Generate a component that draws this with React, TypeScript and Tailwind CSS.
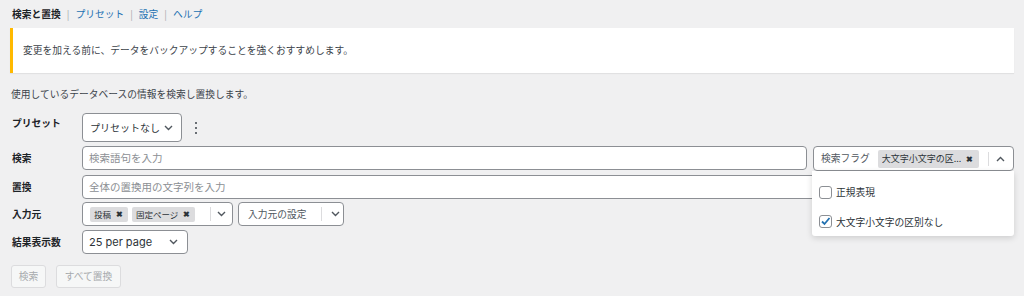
import React from 'react';

const Chevron = ({ up = false }: { up?: boolean }) => (
  <svg width="9" height="6" viewBox="0 0 9 6" className={up ? 'rotate-180' : ''}>
    <polyline points="1,1 4.5,4.5 8,1" fill="none" stroke="#50575e" strokeWidth="1.4" />
  </svg>
);

const Tag = ({ label, className = '' }: { label: string; className?: string }) => (
  <span className={`flex h-[15px] items-center gap-[5px] rounded-[2px] bg-[#dcdcde] pl-[4px] pr-[5px] text-[8.5px] text-[#2c3338] ${className}`}>
    <span className="truncate">{label}</span>
    <span className="text-[8px] font-bold leading-none">✖</span>
  </span>
);

const Checkbox = ({ checked }: { checked?: boolean }) => (
  <span className="flex h-[13px] w-[13px] items-center justify-center rounded-[3px] border border-[#8c8f94] bg-white">
    {checked && (
      <svg width="11" height="11" viewBox="0 0 11 11">
        <polyline points="2,5.5 4.5,8 9.5,2" fill="none" stroke="#2271b1" strokeWidth="1.8" />
      </svg>
    )}
  </span>
);

export default function App() {
  return (
    <div className="h-[296px] w-[1024px] overflow-hidden bg-[#f0f0f1] px-[10px] font-['Noto_Sans_CJK_JP',sans-serif] text-[9.75px] text-[#3c434a]">
      {/* tabs */}
      <div className="flex h-[21px] items-center gap-[6px] pl-[2px] pt-[7px] leading-[14px]">
        <span className="font-bold text-[#1d2327]">検索と置換</span>
        <span className="text-[#a7aaad]">|</span>
        <span className="text-[#2271b1]">プリセット</span>
        <span className="text-[#a7aaad]">|</span>
        <span className="text-[#2271b1]">設定</span>
        <span className="text-[#a7aaad]">|</span>
        <span className="text-[#2271b1]">ヘルプ</span>
      </div>

      {/* notice */}
      <div className="mt-[7px] flex h-[45px] items-center border-l-[3px] border-[#ffb900] bg-white pl-[10px] text-[#3c434a] shadow-[0_1px_1px_rgba(0,0,0,0.06)]">
        変更を加える前に、データをバックアップすることを強くおすすめします。
      </div>

      <p className="mt-[14px] pl-[1px] leading-[14px]">使用しているデータベースの情報を検索し置換します。</p>

      {/* form */}
      <div className="mt-[12px] flex flex-col">
        <div className="flex h-[29px]">
          <div className="w-[72px] pl-[2px] pt-[3px] font-bold leading-[14px] text-[#1d2327]">プリセット</div>
          <div className="flex h-[29px] w-[100px] items-center justify-between rounded-[4px] border border-[#8c8f94] bg-white pl-[7px] pr-[8px] text-[10px] text-[#2c3338]">
            <span>プリセットなし</span>
            <Chevron />
          </div>
          <div className="ml-[13px] flex flex-col items-center justify-center gap-[3px]">
            <span className="h-[2px] w-[2px] rounded-full bg-[#3c434a]" />
            <span className="h-[2px] w-[2px] rounded-full bg-[#3c434a]" />
            <span className="h-[2px] w-[2px] rounded-full bg-[#3c434a]" />
          </div>
        </div>

        <div className="mt-[4px] flex items-start">
          <div className="flex h-[24px] w-[72px] items-center pl-[2px] font-bold text-[#1d2327]">検索</div>
          <div className="flex h-[24px] flex-1 items-center rounded-[4px] border border-[#8c8f94] bg-white pl-[6px] text-[10.5px] text-[#8c8f94]">
            検索語句を入力
          </div>
          <div className="relative ml-[6px] w-[201px]">
            <div className="flex h-[25px] items-center rounded-[4px] border border-[#8c8f94] bg-white pl-[7px] text-[#50575e]">
              <span>検索フラグ</span>
              <Tag label="大文字小文字の区..." className="ml-[8px] h-[18px] w-[101px] text-[9px]" />
              <span className="ml-[9px] h-[14px] w-px bg-[#dcdcde]" />
              <span className="ml-[7px] flex items-center">
                <Chevron up />
              </span>
            </div>
            <div className="absolute left-[-1px] top-[25px] z-10 flex h-[65px] w-[202px] flex-col rounded-b-[3px] bg-white shadow-[0_2px_6px_rgba(0,0,0,0.15)]">
              <label className="mt-[14px] flex items-center gap-[4px] pl-[7px] text-[#2c3338]">
                <Checkbox />
                <span>正規表現</span>
              </label>
              <label className="mt-[15px] flex items-center gap-[4px] pl-[7px] text-[#2c3338]">
                <Checkbox checked />
                <span>大文字小文字の区別なし</span>
              </label>
            </div>
          </div>
        </div>

        <div className="mt-[4px] flex">
          <div className="flex h-[24px] w-[72px] items-center pl-[2px] font-bold text-[#1d2327]">置換</div>
          <div className="flex h-[24px] flex-1 items-center rounded-[4px] border border-[#8c8f94] bg-white pl-[6px] text-[10.5px] text-[#8c8f94]">
            全体の置換用の文字列を入力
          </div>
        </div>

        <div className="mt-[3px] flex">
          <div className="flex h-[24px] w-[72px] items-center pl-[2px] font-bold text-[#1d2327]">入力元</div>
          <div className="flex h-[24px] w-[151px] items-center rounded-[4px] border border-[#8c8f94] bg-white pl-[7px]">
            <Tag label="投稿" />
            <Tag label="固定ページ" className="ml-[4px]" />
            <span className="ml-[15px] h-[14px] w-px bg-[#dcdcde]" />
            <span className="ml-[6px] flex items-center">
              <Chevron />
            </span>
          </div>
          <div className="ml-[5px] flex h-[24px] w-[106px] items-center rounded-[4px] border border-[#8c8f94] bg-white pl-[9px] text-[#50575e]">
            <span>入力元の設定</span>
            <span className="ml-[14px] h-[14px] w-px bg-[#dcdcde]" />
            <span className="ml-[9px] flex items-center">
              <Chevron />
            </span>
          </div>
        </div>

        <div className="mt-[4px] flex">
          <div className="flex h-[24px] w-[72px] items-center pl-[2px] font-bold text-[#1d2327]">結果表示数</div>
          <div className="flex h-[24px] w-[106px] items-center justify-between rounded-[4px] border border-[#8c8f94] bg-white pl-[6px] pr-[9px] font-['Inter',sans-serif] text-[11px] text-[#2c3338]">
            <span>25 per page</span>
            <Chevron />
          </div>
        </div>

        <div className="mt-[11px] flex gap-[10px] pl-[1px]">
          <button className="flex h-[23px] w-[35px] items-center justify-center rounded-[3px] border border-[#dcdcde] bg-[#f6f7f7] text-[#a7aaad]">
            検索
          </button>
          <button className="flex h-[23px] w-[65px] items-center justify-center rounded-[3px] border border-[#dcdcde] bg-[#f6f7f7] text-[#a7aaad]">
            すべて置換
          </button>
        </div>
      </div>
    </div>
  );
}
